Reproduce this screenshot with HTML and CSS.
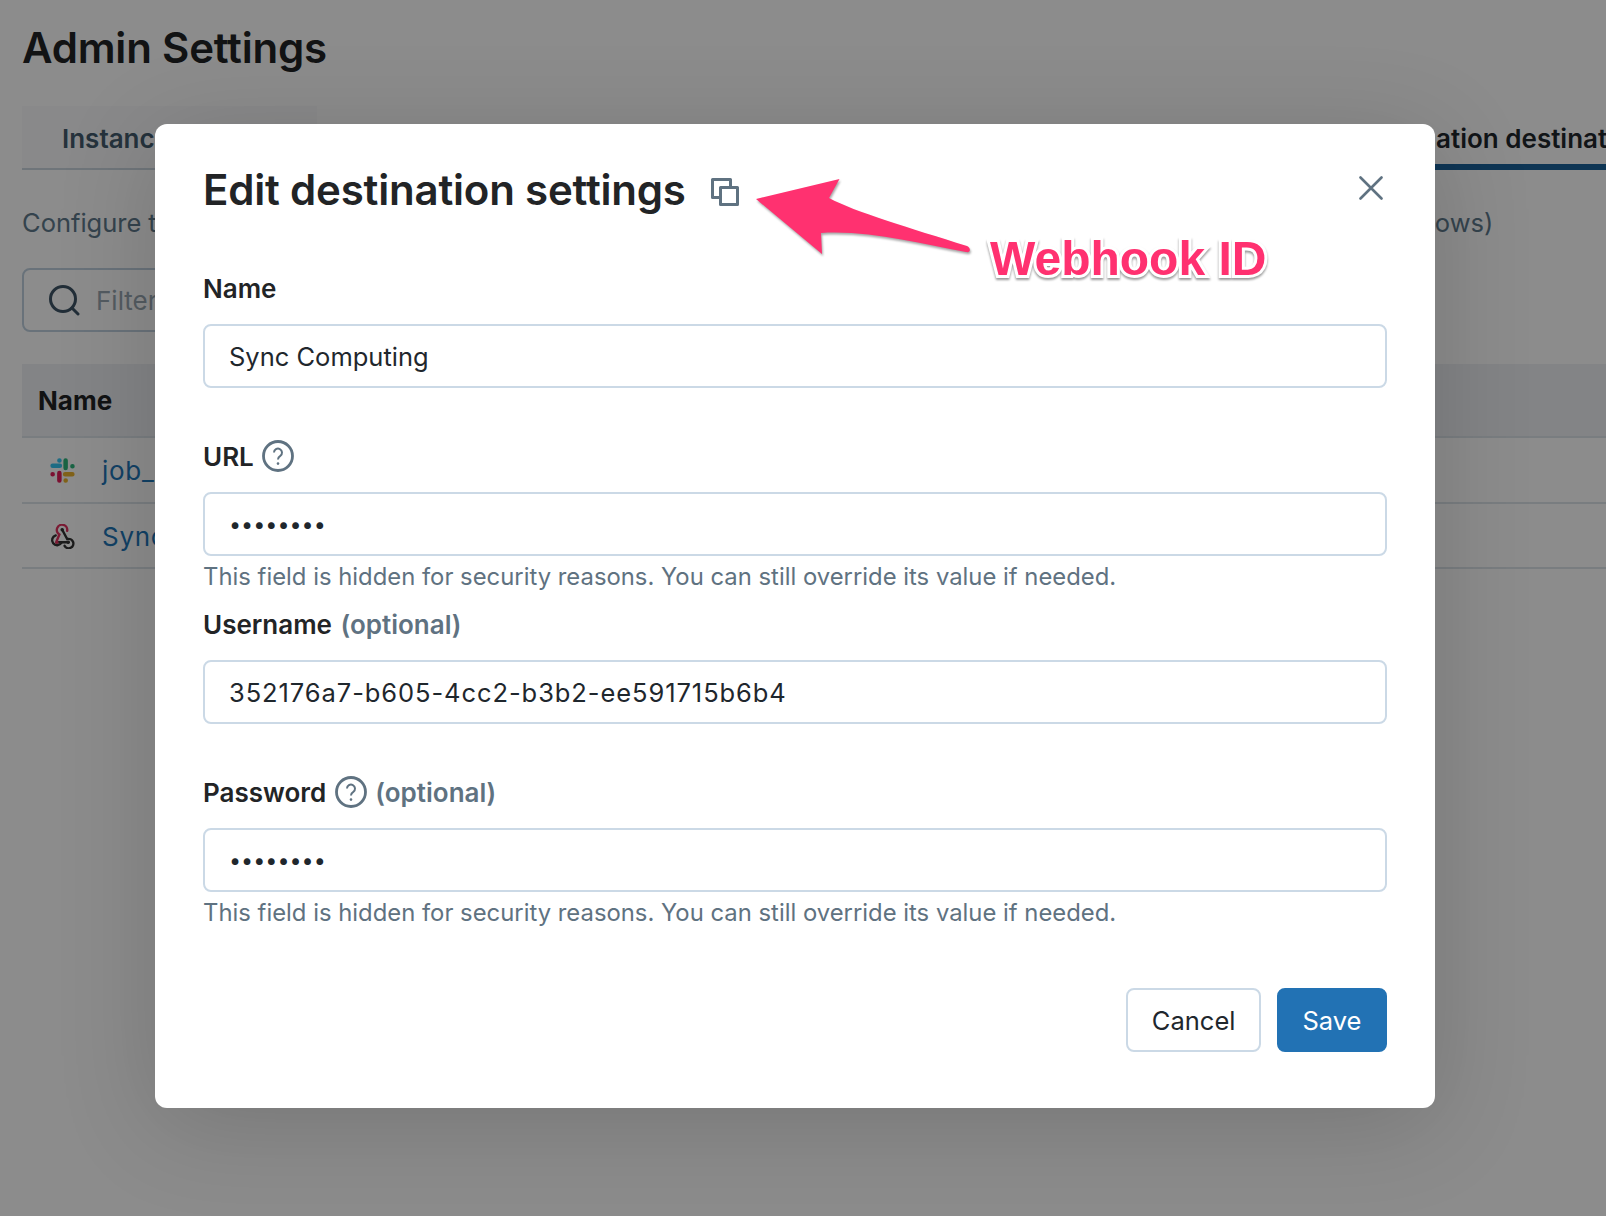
FILE: index.html
```html
<!DOCTYPE html>
<html lang="en">
<head>
<meta charset="utf-8">
<title>Admin Settings</title>
<link rel="stylesheet" href="styles.css">
</head>
<body>
<main class="page">
  <h1 class="page-title">Admin Settings</h1>
  <nav class="tabs">
    <div class="tab">Instance settings</div>
    <div class="tab tab-active">Notification destinations</div>
  </nav>
  <p class="intro">Configure the destinations which can be used to send notifications from this workspace (for example, jobs and workflows)</p>
  <div class="filter">
    <svg class="filter-icon" viewBox="0 0 32 32" fill="none" stroke="#3f5566" stroke-width="3"><circle cx="15" cy="15" r="12.5"/><path d="M24 24l6 6" stroke-linecap="round"/></svg>
    <span class="filter-text">Filter destinations</span>
  </div>
  <div class="table">
    <div class="thead">Name</div>
    <div class="trow">
      <svg class="row-icon" viewBox="0 0 24 24"><g fill="none" stroke-width="4.300" stroke-linecap="round"><path stroke="#36c5f0" d="M2.500 7.500h7M9 2.500h.1"/><path stroke="#2eb67d" d="M15 2.500v7M21.500 8h.1"/><path stroke="#ecb22e" d="M21.500 15.500h-7M15 21.500h.1"/><path stroke="#e01e5a" d="M9 21.500v-7M2.500 15.500h.1"/></g></svg>
      <a class="row-link">job_alerts</a>
    </div>
    <div class="trow">
      <svg class="row-icon" viewBox="0 0 24 24" fill="none" stroke-width="2.300" stroke-linecap="round"><path stroke="#e0325f" d="M6.500 16 9 10A5 5 0 1 1 16.500 6.500"/><path stroke="#333" d="M11.700 5.500 16.500 14.500A4.500 4.500 0 1 1 14 21"/><path stroke="#333" d="M6.500 17.500H17.500"/><path stroke="#333" d="M5.500 11A4.800 4.800 0 1 0 11 18"/><circle cx="11.700" cy="5.500" r="1.700" fill="#333" stroke="none"/><circle cx="6.500" cy="17.500" r="1.700" fill="#e0325f" stroke="none"/><circle cx="17.500" cy="17.500" r="1.700" fill="#333" stroke="none"/></svg>
      <a class="row-link">Sync Computing</a>
    </div>
  </div>
</main>

<div class="overlay"></div>

<section class="modal">
  <header class="modal-head">
    <h2 class="modal-title">Edit destination settings</h2>
    <svg class="copy-icon" viewBox="0 0 28 28" fill="none" stroke="#5f7281" stroke-width="3" stroke-linejoin="round"><path d="M19.500 8V1.500H1.500V19.500H8"/><rect x="9.500" y="9.500" width="17" height="17"/></svg>
    <svg class="close-icon" viewBox="0 0 24 24" fill="none" stroke="#5f7281" stroke-width="2.600" stroke-linecap="round"><path d="M1.500 1.500l21 21M22.500 1.500l-21 21"/></svg>
  </header>
  <div class="field">
    <label class="label">Name</label>
    <input class="input" type="text" value="Sync Computing">
  </div>
  <div class="field">
    <label class="label">URL <svg class="help" viewBox="0 0 32 32" fill="none" stroke="#5f7281"><circle cx="16" cy="16" r="14.500" stroke-width="2.800"/><path d="M12 12.600a4 4 0 1 1 6.300 3.300c-1.500 1-2.300 1.900-2.300 3.600" stroke-width="2"/><circle cx="16" cy="23.600" r="1.300" fill="#5f7281" stroke="none"/></svg></label>
    <input class="input input-secret" type="password" value="12345678">
    <p class="hint">This field is hidden for security reasons. You can still override its value if needed.</p>
  </div>
  <div class="field">
    <label class="label">Username <span class="optional">(optional)</span></label>
    <input class="input input-id" type="text" value="352176a7-b605-4cc2-b3b2-ee591715b6b4">
  </div>
  <div class="field">
    <label class="label">Password <svg class="help" viewBox="0 0 32 32" fill="none" stroke="#5f7281"><circle cx="16" cy="16" r="14.500" stroke-width="2.800"/><path d="M12 12.600a4 4 0 1 1 6.300 3.300c-1.500 1-2.300 1.900-2.300 3.600" stroke-width="2"/><circle cx="16" cy="23.600" r="1.300" fill="#5f7281" stroke="none"/></svg> <span class="optional">(optional)</span></label>
    <input class="input input-secret" type="password" value="12345678">
    <p class="hint">This field is hidden for security reasons. You can still override its value if needed.</p>
  </div>
  <footer class="modal-foot">
    <button class="btn">Cancel</button>
    <button class="btn btn-primary">Save</button>
  </footer>
</section>

<svg class="arrow" viewBox="0 0 240 110" width="240" height="110"><path class="arrow-shape" d="M6 29 89.500 9 79 28C105 42 160 58 217 76 221 78 221 83 216 82 170 74 120 60 71 63L72 84Z"/></svg>
<div class="callout">Webhook ID</div>
</body>
</html>
```
FILE: styles.css
```css
* { box-sizing: border-box; }
html, body { margin: 0; height: 100%; }
body {
  width: 1606px;
  height: 1216px;
  overflow: hidden;
  position: relative;
  background: #fff;
  font-family: Inter, "Liberation Sans", sans-serif;
  color: #222426;
}
.page { padding: 23px 0 0 22px; }
.page-title { margin: 0; font-size: 42px; line-height: 50px; font-weight: 600; letter-spacing: -.2px; color: #222426; }
.tabs {
  display: flex;
  height: 64px;
  margin-top: 33px;
  font-size: 26px;
  font-weight: 600;
  line-height: 66px;
  white-space: nowrap;
  overflow: hidden;
}
.tab { flex: none; padding: 0 40px; background: #fafafb; border-bottom: 2px solid #cbd5df; color: #445b6d; }
.tab-active {
  margin-left: 1035px;
  padding: 0;
  width: 400px;
  background: none;
  color: #1f272d;
  border-bottom: 6px solid #1a6299;
}
.intro { margin: 36px 0 0; font-size: 25.500px; line-height: 34px; word-spacing: -.2px; color: #5f7a8d; white-space: nowrap; }
.filter {
  display: flex;
  align-items: center;
  gap: 16px;
  width: 420px;
  height: 64px;
  margin-top: 28px;
  padding-left: 24px;
  border: 2px solid #bfd0de;
  border-radius: 8px;
}
.filter-icon { width: 32px; height: 32px; }
.filter-text { font-size: 26px; color: #98a6b1; }
.table { margin-top: 32px; }
.thead {
  height: 74px;
  padding-left: 16px;
  background: #eef1f4;
  border-bottom: 2px solid #dde4ea;
  font-size: 26px;
  font-weight: 700;
  line-height: 74px;
}
.trow {
  display: flex;
  align-items: center;
  height: 65.500px;
  padding: 2px 0 0 28px;
  border-bottom: 2px solid #dde4ea;
  font-size: 26px;
}
.row-icon { flex: none; width: 25px; height: 25px; margin-right: 27px; }
.row-link { color: #1f77b9; letter-spacing: .7px; }

.overlay { position: absolute; inset: 0; background: rgba(0, 0, 0, .45); }

.modal {
  position: absolute;
  left: 155px;
  top: 124px;
  width: 1280px;
  height: 984px;
  padding: 41px 48px 0;
  background: #fff;
  border-radius: 12px;
  box-shadow: 0 16px 100px rgba(0, 0, 0, .16);
}
.modal-head { display: flex; align-items: center; height: 50px; margin-bottom: 53px; }
.modal-title { margin: 0; font-size: 42px; line-height: 50px; font-weight: 600; letter-spacing: -.2px; color: #222426; }
.copy-icon { width: 28px; height: 28px; margin-left: 25px; margin-top: 4px; }
.close-icon { width: 24px; height: 24px; margin: -4px 4px 0 auto; }
.field { display: flex; flex-direction: column; height: 168px; }
.label {
  display: flex;
  align-items: center;
  gap: 8.500px;
  height: 40px;
  margin-bottom: 16px;
  font-size: 26px;
  font-weight: 600;
  color: #222426;
}
.optional { color: #5f7281; }
.help { width: 32px; height: 32px; }
.input {
  display: block;
  flex: none;
  width: 100%;
  height: 64px;
  padding: 0 24px;
  border: 2px solid #cbd9e6;
  border-radius: 8px;
  background: #fff;
  font-family: Inter, "Liberation Sans", sans-serif;
  font-size: 25.500px;
  color: #1f272d;
  outline: none;
}
.input-secret { font-size: 21.500px; }
.input-id { letter-spacing: .92px; }
.hint { margin: 4px 0 0; font-size: 23.850px; line-height: 34px; color: #5f7281; white-space: nowrap; }
.modal-foot { display: flex; justify-content: flex-end; gap: 16px; padding-top: 48px; }
.btn {
  height: 64px;
  padding: 0 23.500px;
  border: 2px solid #cbd9e6;
  border-radius: 8px;
  background: #fff;
  font-family: Inter, "Liberation Sans", sans-serif;
  font-size: 25.500px;
  color: #1f272d;
}
.btn-primary { background: #2272b4; border-color: #2272b4; color: #fff; }

.arrow { position: absolute; left: 750px; top: 170px; overflow: visible; }
.arrow-shape { fill: #ff3170; filter: drop-shadow(1px 2px 1px rgba(0, 0, 0, .35)); }
.callout {
  position: absolute;
  left: 990px;
  top: 231px;
  font-family: "Liberation Sans", Arial, sans-serif;
  font-size: 48px;
  line-height: 56px;
  font-weight: 700;
  color: #ff3170;
  -webkit-text-stroke: 6px #fff;
  paint-order: stroke fill;
  filter: drop-shadow(0 2px 1px rgba(0, 0, 0, .4));
  white-space: nowrap;
}
```
